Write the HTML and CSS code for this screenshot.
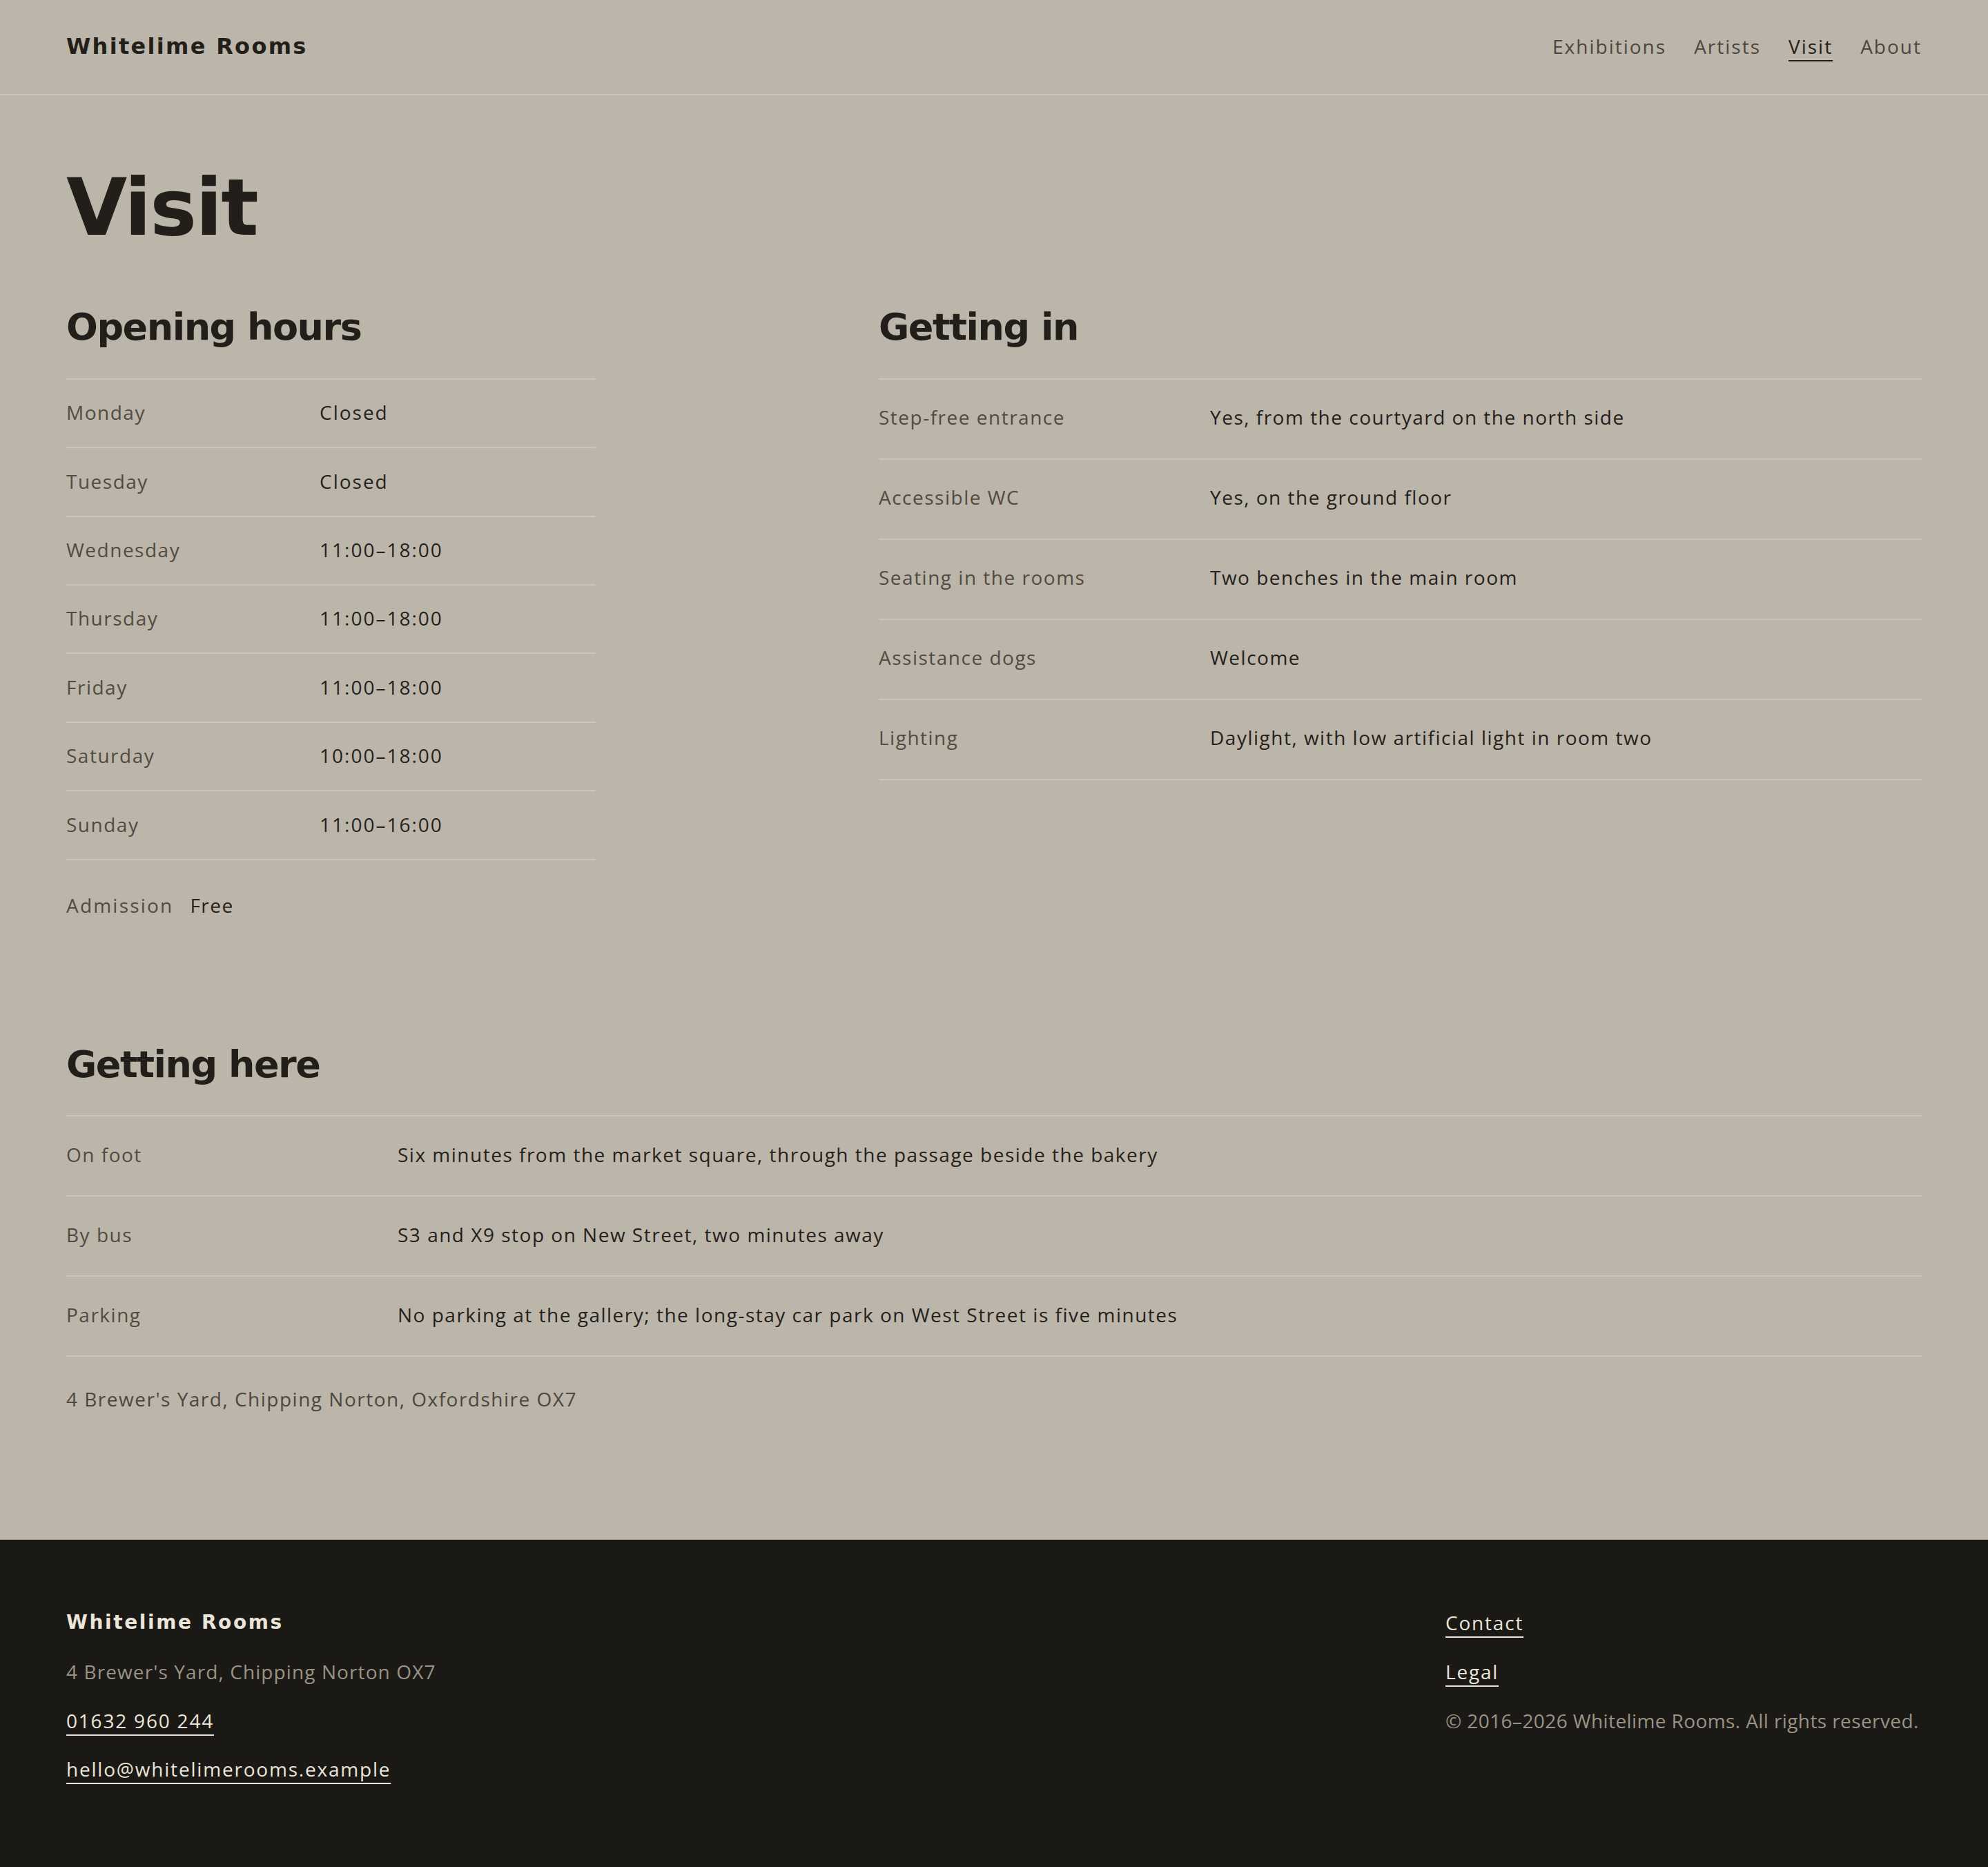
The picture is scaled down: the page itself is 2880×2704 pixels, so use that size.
FILE: index.html
```html
<!DOCTYPE html>
<html lang="en">
<head>
  <meta charset="utf-8">
  <title>Visit – Whitelime Rooms</title>
  <link rel="stylesheet" href="styles.css">
</head>
<body>
  <header class="site-header">
    <a class="logo" href="#">Whitelime Rooms</a>
    <nav class="nav">
      <a href="#">Exhibitions</a>
      <a href="#">Artists</a>
      <a href="#" class="active">Visit</a>
      <a href="#">About</a>
    </nav>
  </header>

  <main class="page">
    <h1 class="page-title">Visit</h1>

    <div class="columns">
      <section>
        <h2>Opening hours</h2>
        <table class="hours">
          <tr><td>Monday</td><td>Closed</td></tr>
          <tr><td>Tuesday</td><td>Closed</td></tr>
          <tr><td>Wednesday</td><td>11:00–18:00</td></tr>
          <tr><td>Thursday</td><td>11:00–18:00</td></tr>
          <tr><td>Friday</td><td>11:00–18:00</td></tr>
          <tr><td>Saturday</td><td>10:00–18:00</td></tr>
          <tr><td>Sunday</td><td>11:00–16:00</td></tr>
        </table>
        <p class="admission"><span>Admission</span><span>Free</span></p>
      </section>

      <section>
        <h2>Getting in</h2>
        <dl class="facts">
          <div class="fact"><dt>Step-free entrance</dt><dd>Yes, from the courtyard on the north side</dd></div>
          <div class="fact"><dt>Accessible WC</dt><dd>Yes, on the ground floor</dd></div>
          <div class="fact"><dt>Seating in the rooms</dt><dd>Two benches in the main room</dd></div>
          <div class="fact"><dt>Assistance dogs</dt><dd>Welcome</dd></div>
          <div class="fact"><dt>Lighting</dt><dd>Daylight, with low artificial light in room two</dd></div>
        </dl>
      </section>
    </div>

    <section class="getting-here">
      <h2>Getting here</h2>
      <dl class="facts">
        <div class="fact"><dt>On foot</dt><dd>Six minutes from the market square, through the passage beside the bakery</dd></div>
        <div class="fact"><dt>By bus</dt><dd>S3 and X9 stop on New Street, two minutes away</dd></div>
        <div class="fact"><dt>Parking</dt><dd>No parking at the gallery; the long-stay car park on West Street is five minutes</dd></div>
      </dl>
      <p class="address">4 Brewer's Yard, Chipping Norton, Oxfordshire OX7</p>
    </section>
  </main>

  <footer class="site-footer">
    <div class="footer-col">
      <div class="footer-logo">Whitelime Rooms</div>
      <div class="muted footer-address">4 Brewer's Yard, Chipping Norton OX7</div>
      <a href="#">01632 960 244</a>
      <a href="#">hello@whitelimerooms.example</a>
    </div>
    <div class="footer-col">
      <a href="#">Contact</a>
      <a href="#">Legal</a>
      <div class="muted copyright">© 2016–2026 Whitelime Rooms. All rights reserved.</div>
    </div>
  </footer>
</body>
</html>
```

FILE: styles.css
```css
body {
  margin: 0;
  background: #bcb5a9;
  color: #24211c;
  font-family: "Open Sans", sans-serif;
  font-size: 28px;
  line-height: 42px;
  letter-spacing: 1.5px;
}

a {
  color: inherit;
  text-decoration: none;
}

h1, h2, .logo, .footer-logo {
  font-family: "DejaVu Sans", sans-serif;
  font-weight: bold;
  color: #221f1a;
}

/* header */
.site-header {
  display: flex;
  justify-content: space-between;
  align-items: center;
  height: 136px;
  padding: 0 96px;
  border-bottom: 2px solid #ccc5b9;
}
.logo {
  font-size: 32px;
  letter-spacing: 2.3px;
  margin-top: -2px;
}
.nav {
  display: flex;
  gap: 40px;
  margin-top: -2px;
}
.nav a {
  color: #4d473e;
  letter-spacing: 2px;
}
.nav a.active {
  color: #221f1a;
  text-decoration: underline;
  text-decoration-thickness: 2px;
  text-underline-offset: 9px;
}

/* main */
.page {
  padding: 0 96px 183px;
}
.page-title {
  font-size: 114px;
  line-height: 1;
  letter-spacing: -2px;
  margin: 106px 0 84px;
}
h2 {
  font-size: 54px;
  line-height: 64.8px;
  letter-spacing: -1.5px;
  margin: 0 0 41px;
}

.columns {
  display: grid;
  grid-template-columns: 767px 1fr;
  column-gap: 410px;
  align-items: start;
}

.hours {
  width: 100%;
  border-collapse: collapse;
}
.hours tr {
  border-top: 2px solid #ccc5b9;
  border-bottom: 2px solid #ccc5b9;
}
.hours td {
  padding: 26.5px 0 28.9px;
}
.hours td:first-child {
  width: 367px;
  color: #514b42;
}
.hours td:last-child {
  letter-spacing: 2px;
}

.admission {
  display: flex;
  gap: 24px;
  margin: 44px 0 0;
}
.admission span:first-child {
  color: #514b42;
  letter-spacing: 2.2px;
}

.facts {
  margin: 0;
  border-bottom: 2px solid #ccc5b9;
}
.fact {
  display: grid;
  grid-template-columns: 480px 1fr;
  padding: 33px 0 39px;
  border-top: 2px solid #ccc5b9;
}
.fact dt {
  color: #514b42;
}
.fact dd {
  margin: 0;
}

.getting-here {
  margin-top: 178px;
}
.getting-here .fact {
  padding: 34px 0 38px;
}
.address {
  margin: 40px 0 0;
  color: #4d473e;
}

/* footer */
.site-footer {
  display: flex;
  justify-content: space-between;
  background: #1b1915;
  color: #ebe5d9;
  padding: 99px 96px 121px;
}
.footer-col {
  display: flex;
  flex-direction: column;
  align-items: flex-start;
  gap: 28.7px;
}
.footer-col:last-child {
  width: 690px;
}
.footer-logo {
  color: #ebe5d9;
  font-size: 28px;
  letter-spacing: 2.6px;
}
.footer-col a {
  letter-spacing: 1.8px;
  text-decoration: underline;
  text-decoration-thickness: 2px;
  text-underline-offset: 9px;
}
.muted {
  color: #9a9385;
}
.footer-address {
  letter-spacing: 1.1px;
}
.copyright {
  white-space: nowrap;
  letter-spacing: 0.4px;
}
```
